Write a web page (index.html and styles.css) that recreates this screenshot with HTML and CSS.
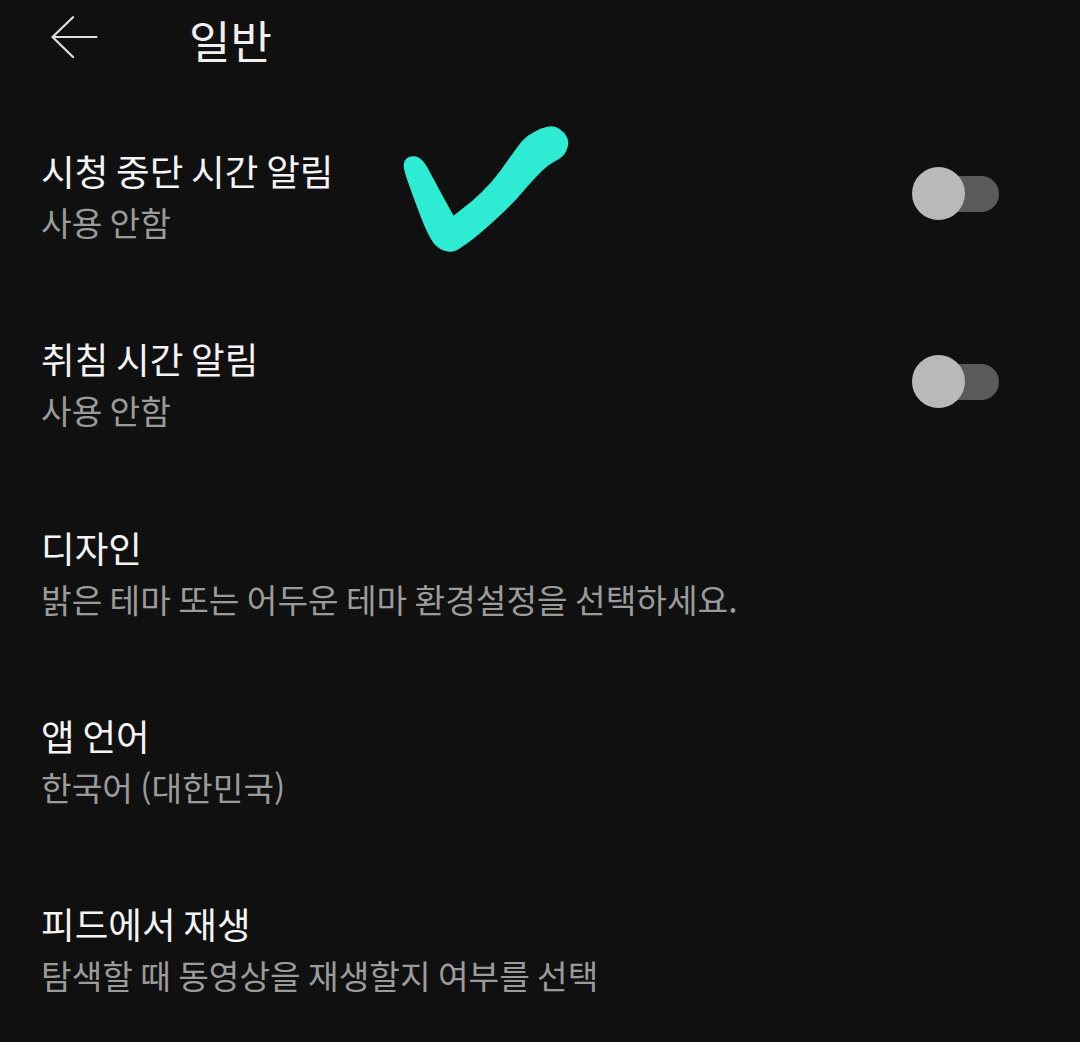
FILE: index.html
```html
<!DOCTYPE html>
<html lang="ko">
<head>
<meta charset="utf-8">
<title>일반</title>
<link rel="stylesheet" href="styles.css">
</head>
<body>
<div class="screen">
  <header class="appbar">
    <svg class="back" viewBox="0 0 48 44" width="48" height="44" aria-hidden="true"><path d="M46.500 21H2.500M23 1.200 2.500 21 23 41" fill="none" stroke="#e0e0e0" stroke-width="2.200" stroke-linecap="round" stroke-linejoin="round"/></svg>
    <h1 class="appbar-title">일반</h1>
  </header>
  <main class="list">
    <section class="row">
      <div class="row-text"><div class="row-title">시청 중단 시간 알림</div><div class="row-sub">사용 안함</div></div>
      <div class="toggle"><span class="knob"></span></div>
    </section>
    <section class="row">
      <div class="row-text"><div class="row-title">취침 시간 알림</div><div class="row-sub">사용 안함</div></div>
      <div class="toggle"><span class="knob"></span></div>
    </section>
    <section class="row">
      <div class="row-text"><div class="row-title">디자인</div><div class="row-sub">밝은 테마 또는 어두운 테마 환경설정을 선택하세요.</div></div>
    </section>
    <section class="row">
      <div class="row-text"><div class="row-title">앱 언어</div><div class="row-sub">한국어 (대한민국)</div></div>
    </section>
    <section class="row">
      <div class="row-text"><div class="row-title">피드에서 재생</div><div class="row-sub">탐색할 때 동영상을 재생할지 여부를 선택</div></div>
    </section>
  </main>
  <svg class="scribble" viewBox="0 0 570 450" width="190" height="150" aria-hidden="true"><path fill="#2eebd3" stroke="#2eebd3" stroke-width="4" stroke-linejoin="round" d="M44 159Q48 146 60 142Q72 138 85 144Q97 150 110 173Q122 195 156 258L190 320L218 298Q248 276 276 248Q306 220 334 182Q362 142 384 112Q404 84 428 71Q450 56 472 52Q494 47 512 62Q530 76 532 92Q535 108 526 124Q516 142 494 152Q474 162 452 184Q428 208 402 238Q378 268 342 302Q306 336 274 364Q242 392 216 408Q192 428 170 422Q148 417 134 400Q122 385 110 358Q98 330 83 290Q68 250 54 210Q40 170 44 159Z"/></svg>
</div>
</body>
</html>
```
FILE: styles.css
```css
* { box-sizing: border-box; }
html, body { margin: 0; padding: 0; }
body {
  background: #101010;
  font-family: "Noto Sans CJK KR", "Noto Sans", sans-serif;
  color: #f2f2f2;
}
.screen { position: relative; width: 1080px; height: 1042px; overflow: hidden; background: #101010; }
.appbar { display: flex; align-items: center; height: 102px; padding: 0 0 22px 50px; }
.back { flex: none; margin-top: -5px; }
.appbar-title { margin: 0 0 0 91px; font-size: 45px; line-height: 80px; font-weight: 400; color: #f0f0f0; }
.list { display: flex; flex-direction: column; }
.row { display: flex; align-items: center; justify-content: space-between; height: 188.250px; padding: 0 81px 0 41px; }
.row-text { display: flex; flex-direction: column; }
.row-title { font-size: 36.600px; line-height: 51px; word-spacing: -2.500px; color: #f4f4f4; }
.row-sub { font-size: 33.300px; line-height: 51px; word-spacing: -2px; color: #9b9b9b; }
.toggle { position: relative; width: 60px; height: 36px; margin-top: -4px; border-radius: 18px; background: #5a5a5a; }
.knob { position: absolute; left: -27px; top: -9px; width: 53px; height: 53px; border-radius: 50%; background: #b9b9b9; }
.scribble { position: absolute; left: 390px; top: 110px; }
```
